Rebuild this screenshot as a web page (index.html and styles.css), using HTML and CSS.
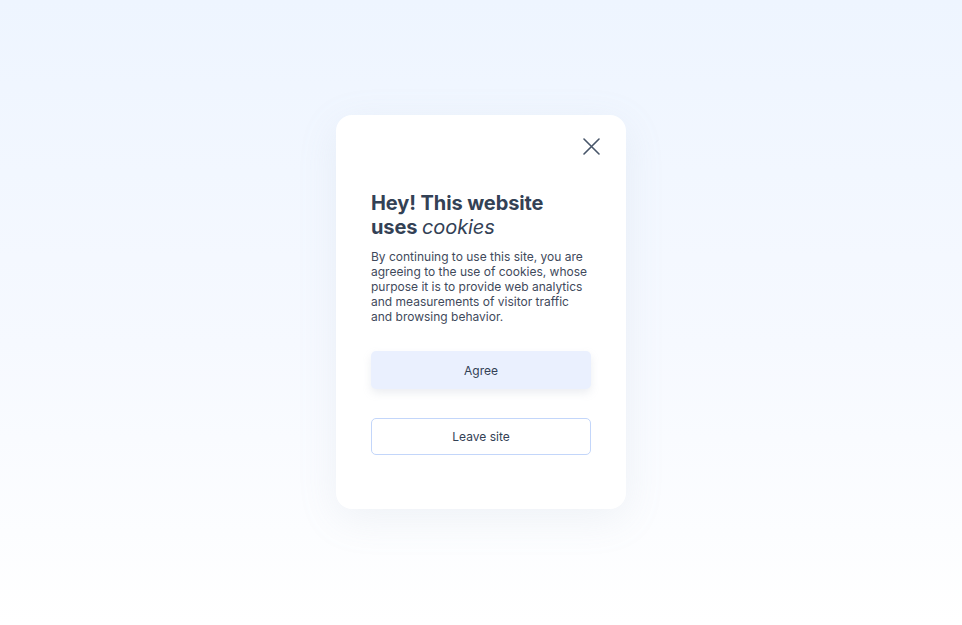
FILE: index.html
```html
<!DOCTYPE html>
<html lang="en">
<head>
    <meta charset="UTF-8">
    <meta name="viewport" content="width=device-width, initial-scale=1.0">
    <title>Cookies</title>
    <link rel="stylesheet" href="styles.css">
</head>
<body>
    <main class="page">
        <section class="cookie-card">
            <div class="card-top">
                <button class="close-btn" aria-label="Close">
                    <svg width="17" height="17" viewBox="0 0 17 17" fill="none" stroke="#475569" stroke-width="1.6" stroke-linecap="round">
                        <path d="M1 1 L16 16 M16 1 L1 16"/>
                    </svg>
                </button>
            </div>
            <h1 class="cookie-title">Hey! This website uses <em>cookies</em></h1>
            <p class="cookie-text">By continuing to use this site, you are agreeing to the use of cookies, whose purpose it is to provide web analytics and measurements of visitor traffic and browsing behavior.</p>
            <div class="cookie-actions">
                <button class="btn btn-agree">Agree</button>
                <button class="btn btn-leave">Leave site</button>
            </div>
        </section>
    </main>
</body>
</html>
```

FILE: styles.css
```css
html, body {
    margin: 0;
    padding: 0;
    height: 100%;
}
body {
    font-family: Inter, "Noto Sans", sans-serif;
    color: #334155;
    background: linear-gradient(180deg, #eef5ff 0%, #f6f9ff 55%, #ffffff 100%);
}
.page {
    display: flex;
    justify-content: center;
    padding-top: 115px;
}
.cookie-card {
    width: 290px;
    height: 394px;
    box-sizing: border-box;
    background: #ffffff;
    border-radius: 16px;
    padding: 23px 35px 0 35px;
    box-shadow: 0 10px 40px rgba(148, 163, 184, 0.12);
}
.card-top {
    display: flex;
    justify-content: flex-end;
    margin-right: -9px;
}
.close-btn {
    background: none;
    border: 0;
    padding: 0;
    width: 17px;
    height: 17px;
    cursor: pointer;
    display: block;
}
.close-btn svg {
    display: block;
}
.cookie-title {
    margin: 36px 0 0;
    font-size: 20px;
    line-height: 24px;
    font-weight: 700;
    color: #334155;
    letter-spacing: -0.1px;
}
.cookie-title em {
    font-weight: 400;
    font-style: italic;
}
.cookie-text {
    margin: 10px 0 0;
    font-size: 12px;
    line-height: 15px;
    color: #3f4a5c;
}
.cookie-actions {
    display: flex;
    flex-direction: column;
    gap: 29px;
    margin-top: 27px;
}
.btn {
    font-family: inherit;
    font-size: 12px;
    color: #334155;
    height: 38px;
    border-radius: 5px;
    cursor: pointer;
}
.btn-agree {
    background: #eaf0fe;
    border: 0;
    box-shadow: 0 4px 8px rgba(148, 163, 184, 0.18);
}
.btn-leave {
    background: #ffffff;
    border: 1px solid #c3d6fa;
    height: 37px;
}
```
